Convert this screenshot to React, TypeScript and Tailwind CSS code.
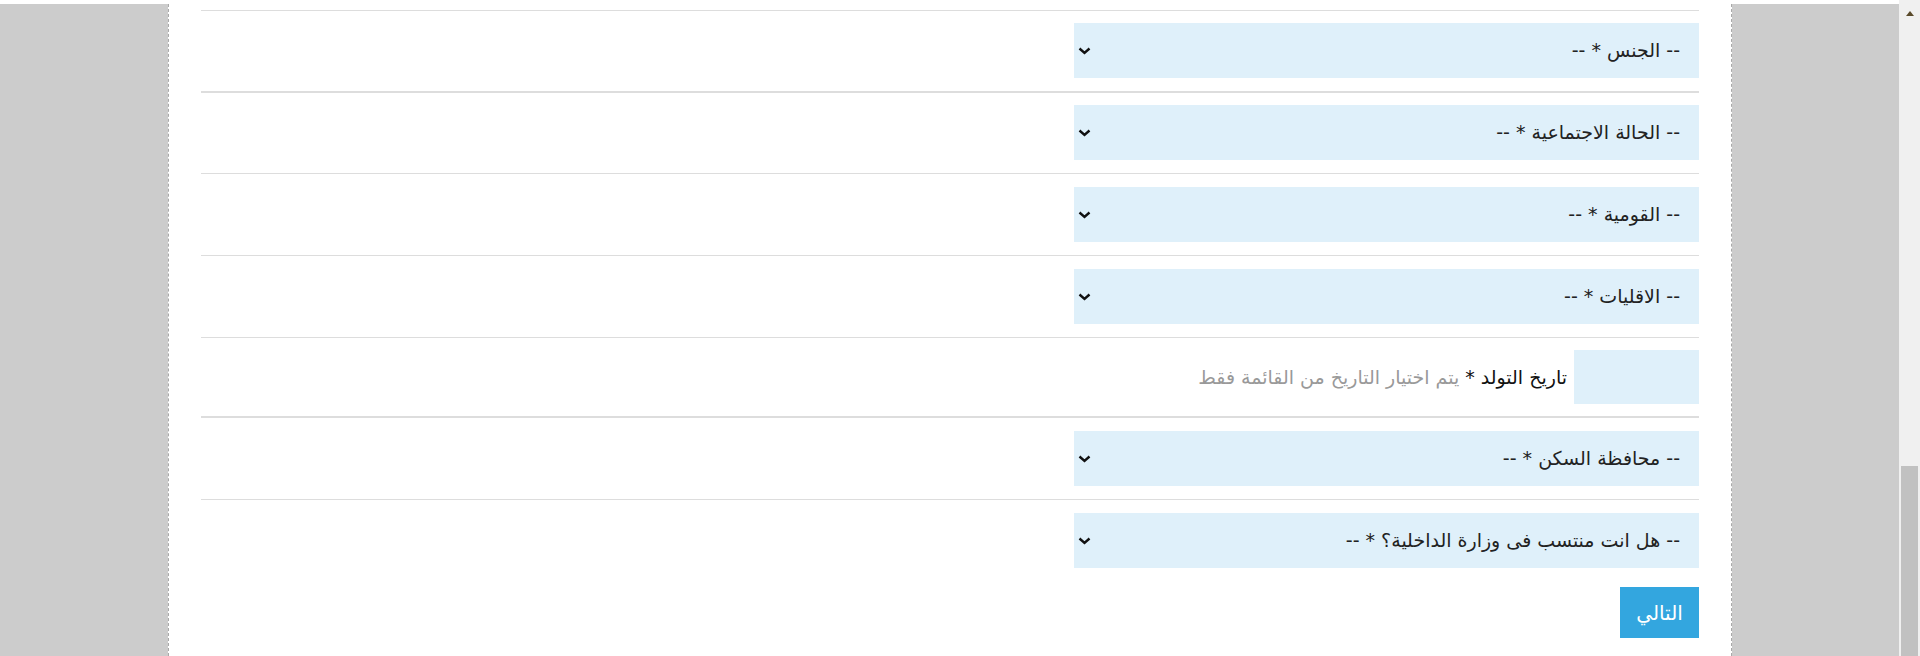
import React from 'react';

const font = { fontFamily: '"DejaVu Sans", sans-serif' };

const Chevron: React.FC = () => (
  <svg width="13" height="8" viewBox="0 0 13 8" className="shrink-0">
    <polyline points="1.5,1.5 6.5,6 11.5,1.5" fill="none" stroke="#111" strokeWidth="2.4" />
  </svg>
);

const SelectBox: React.FC<{ label: string }> = ({ label }) => (
  <div className="flex h-[55px] w-[625px] items-center justify-between bg-[#dff0fa] pr-[19px] pl-[4px] text-[19px] text-[#222]">
    <span>{label}</span>
    <Chevron />
  </div>
);

const Row: React.FC<{ children: React.ReactNode; className?: string }> = ({ children, className }) => (
  <div className={`flex border-t border-[#dddddd] ${className ?? 'pt-[13px] pb-[13px]'}`}>{children}</div>
);

const App: React.FC = () => {
  return (
    <div className="flex h-[656px] w-[1920px] overflow-hidden bg-white" style={font}>
      <div className="mt-[4px] w-[169px] border-r border-dashed border-[#a9a9a9] bg-[#cccccc] bg-clip-padding" />

      <div dir="rtl" className="flex w-[1562px] flex-col px-[32px]">
        <div className="h-[10px]" />
        <Row className="pt-[12px] pb-[13px]">
          <SelectBox label="-- الجنس * --" />
        </Row>
        <Row className="border-t-2 pt-[12px] pb-[13px]">
          <SelectBox label="-- الحالة الاجتماعية * --" />
        </Row>
        <Row>
          <SelectBox label="-- القومية * --" />
        </Row>
        <Row>
          <SelectBox label="-- الاقليات * --" />
        </Row>
        <Row className="pt-[12px] pb-[12px]">
          <div className="flex items-center gap-[7px] text-[19px]">
            <div className="h-[54px] w-[125px] bg-[#dff0fa]" />
            <span className="text-[#111]">
              تاريخ التولد * <span className="text-[#999999]">يتم اختيار التاريخ من القائمة فقط</span>
            </span>
          </div>
        </Row>
        <Row className="border-t-2 pt-[13px] pb-[13px]">
          <SelectBox label="-- محافظة السكن * --" />
        </Row>
        <Row className="pt-[13px] pb-0">
          <SelectBox label="-- هل انت منتسب فى وزارة الداخلية؟ * --" />
        </Row>
        <div className="mt-[19px] flex">
          <button className="flex h-[51px] w-[79px] items-center justify-center bg-[#33a6df] text-[20px] text-white">
            التالي
          </button>
        </div>
      </div>

      <div className="mt-[4px] w-[168px] border-l border-dashed border-[#a9a9a9] bg-[#cccccc] bg-clip-padding" />

      <div className="flex w-[21px] flex-col bg-[#f0f0f0]">
        <div className="flex h-[17px] items-end justify-center pb-[1px]">
          <svg width="8" height="5" viewBox="0 0 8 5">
            <polygon points="4,0 8,5 0,5" fill="#5a4a2a" />
          </svg>
        </div>
        <div className="flex-1" />
        <div className="ml-[2px] h-[190px] w-[17px] bg-[#c1c1c1]" />
      </div>
    </div>
  );
};

export default App;
